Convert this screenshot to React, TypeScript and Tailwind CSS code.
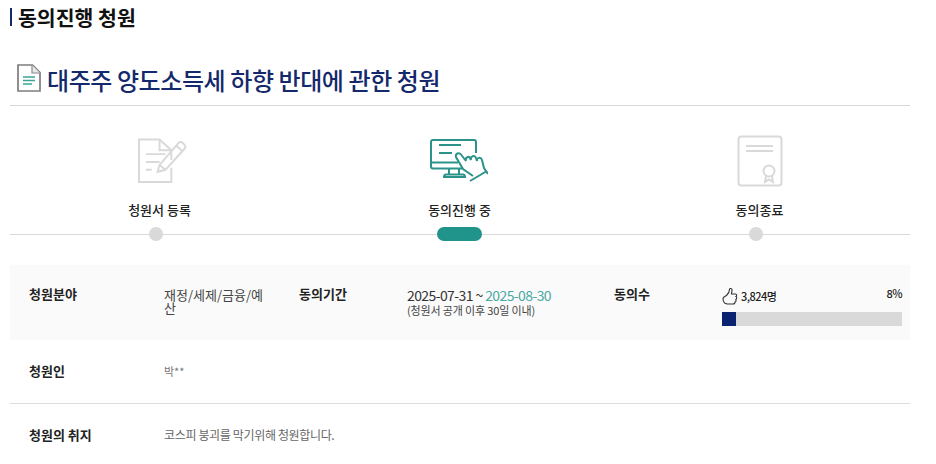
import React from "react";

const font = { fontFamily: '"Noto Sans CJK KR", "Noto Sans", sans-serif' };

function DocIcon() {
  return (
    <svg width="24" height="28" viewBox="0 0 24 28" fill="none" aria-hidden="true">
      <path d="M1 1H15.5L23 8.5V27H1Z" fill="#fff" stroke="#7d7d7d" strokeWidth="1.7" />
      <path d="M15 1V9H23" stroke="#8a8a8a" strokeWidth="1.2" fill="#e8e8e8" />
      <path d="M6 13H18M6 16.5H18M6 20H15" stroke="#3aa597" strokeWidth="1.3" />
    </svg>
  );
}

function RegisterIcon() {
  return (
    <svg width="49" height="46" viewBox="0 0 50 46" fill="none" stroke="#d9d9d9" strokeWidth="2" aria-hidden="true">
      <path d="M34 30V44.5H1V1H22L34 12V22" />
      <path d="M22 1V12H34" />
      <path d="M8 16H28M8 24H22M8 32H14" />
      <path d="M20 34L22 27L41 5C42 3.5 44 3 45.5 4.5L47.5 6.5C49 8 48.5 9.5 47.5 10.5L28 32Z" />
      <path d="M22 27L28 32M39 7.5L45 12.5" />
    </svg>
  );
}

function VoteIcon() {
  return (
    <svg width="58" height="44" viewBox="0 0 58 44" fill="none" stroke="#2b9389" strokeWidth="2" aria-hidden="true">
      <path d="M32 29.5H3C1.8 29.5 1 28.7 1 27.5V3C1 1.8 1.8 1 3 1H44C45.2 1 46 1.8 46 3V14" />
      <path d="M1 23.5H28" />
      <path d="M19 29.5V35M29 29.5V35M14 38C14 36 15 35.5 16 35.5H33C34 35.5 35 36 35 38Z" />
      <path d="M9 6H31M9 14H22" />
      <path d="M43 37L33 30L26 18C25 14.5 29 13 31 15.5L36 22C35 18 39 17 40 19L41 21C40 16.5 45 16 46 19L47 22C46.5 18 51 18 52 21L54 29L58 35" />
      <path d="M40 42L57 32" />
    </svg>
  );
}

function DoneIcon() {
  return (
    <svg width="46" height="52" viewBox="0 0 46 52" fill="none" stroke="#d9d9d9" strokeWidth="2" aria-hidden="true">
      <rect x="1.5" y="1.5" width="43" height="49" rx="3" />
      <path d="M9 11H36M9 16H36" />
      <circle cx="32" cy="36" r="5.5" />
      <path d="M29 41L28 47L32 44.5L36 47L35 41" />
    </svg>
  );
}

function Step({
  icon,
  label,
  active,
  className,
  shift,
  iconShift,
}: {
  icon: React.ReactNode;
  label: string;
  active?: boolean;
  className: string;
  shift: string;
  iconShift?: string;
}) {
  return (
    <div className={`flex w-[140px] flex-col items-center ${className}`}>
      <div className={`flex flex-col items-center ${shift}`}>
        <div className={`flex h-[52px] items-center justify-center ${iconShift ?? ""}`}>{icon}</div>
        <div className="mt-[13px] text-[13px] leading-[20px] font-medium text-[#222]">{label}</div>
      </div>
      <div className="mt-[7px] flex h-[14px] items-center">
        {active ? (
          <span className="ml-[1px] block h-[14px] w-[45px] rounded-full bg-[#20938a]" />
        ) : (
          <span className="block h-[14px] w-[14px] rounded-full bg-[#d9d9d9]" />
        )}
      </div>
    </div>
  );
}

export default function App() {
  return (
    <div className="h-[464px] w-[936px] overflow-hidden bg-white" style={font}>
      <div className="pt-[4px] pl-[10px]">
        <h2 className="flex items-center text-[20.5px] leading-[26px] font-bold text-[#111]">
          <span className="mr-[6px] h-[18px] w-[2px] bg-[#12296b]" />
          동의진행 청원
        </h2>
      </div>

      <div className="mt-[29px] ml-[10px] flex h-[47px] w-[900px] items-start gap-[6px] border-b border-[#d9d9d9] pt-[5px] pl-[7px]">
        <DocIcon />
        <h1 className="text-[24px] leading-[32px] font-medium tracking-[-0.42px] text-[#14296b]">
          대주주 양도소득세 하향 반대에 관한 청원
        </h1>
      </div>

      <div className="relative mt-[29px] ml-[10px] flex h-[106px] w-[900px]">
        <div className="absolute top-[99px] right-0 left-0 h-px bg-[#d9d9d9]" />
        <div className="relative flex">
          <Step icon={<RegisterIcon />} label="청원서 등록" className="ml-[76px]" shift="pl-[7px]" iconShift="ml-[6px]" />
          <Step icon={<VoteIcon />} label="동의진행 중" active className="ml-[163px]" shift="pl-[1px]" />
          <Step icon={<DoneIcon />} label="동의종료" className="ml-[157px]" shift="pl-[7px]" />
        </div>
      </div>

      <div className="mt-[24px] ml-[10px] w-[900px] text-[12px] text-[#555]">
        <div className="flex h-[75px] bg-[#fafafa] pt-[19px]">
          <div className="w-[154px] pl-[19px] text-[13px] leading-[20px] font-bold text-[#222]">청원분야</div>
          <div className="w-[100px] pt-[4px] text-[13px] leading-[13px] text-[#444]">재정/세제/금융/예산</div>
          <div className="ml-[35px] w-[108px] text-[13px] leading-[20px] font-bold text-[#222]">동의기간</div>
          <div className="w-[207px] pt-[2px]">
            <div className="text-[14px] leading-[18px] tracking-[-0.6px] text-[#333]">
              2025-07-31 ~ <span className="text-[#4aa9a2]">2025-08-30</span>
            </div>
            <div className="text-[11px] leading-[12px] tracking-[-0.15px] text-[#444]">(청원서 공개 이후 30일 이내)</div>
          </div>
          <div className="w-[108px] text-[13px] leading-[20px] font-bold text-[#222]">동의수</div>
          <div className="w-[180px]">
            <div className="flex h-[28px] items-start justify-between text-[11px] font-medium text-[#222]">
              <span className="flex items-center gap-[3px] pt-[3px]">
                <svg width="16" height="18" viewBox="0 0 16 18" fill="none" stroke="#333" strokeWidth="1.1" aria-hidden="true">
                  <path d="M4.5 8.5C6 7 7.5 5 7.5 2.5C7.5 1 10 1 10 3C10 5 9.5 6 9.5 7H13.5C15 7 15 9 14 9.5C15 10 15 12 13.8 12.5C14.3 13.5 14 15 13 15C13 16.5 12 17 11 17H6C4.5 17 3.5 16 2.5 16C1.5 15 1 13 1 11.5C1 10 3 9.5 4.5 8.5Z" />
                </svg>
                <span className="tracking-[-0.5px]">3,824명</span>
              </span>
              <span className="pt-[1px] tracking-[-0.5px]">8%</span>
            </div>
            <div className="h-[14px] w-full bg-[#d9d9d9]">
              <div className="h-full bg-[#0a2370]" style={{ width: "8%" }} />
            </div>
          </div>
        </div>

        <div className="flex h-[64px] items-center border-b border-[#ddd] pb-[1px]">
          <div className="w-[154px] pl-[19px] text-[13px] font-bold text-[#222]">청원인</div>
          <div className="text-[11px] text-[#777]">박**</div>
        </div>

        <div className="flex h-[62px] items-center">
          <div className="w-[154px] pl-[19px] text-[13px] font-bold text-[#222]">청원의 취지</div>
          <div className="text-[12px] tracking-[-0.35px] text-[#666]">코스피 붕괴를 막기위해 청원합니다.</div>
        </div>
      </div>
    </div>
  );
}
